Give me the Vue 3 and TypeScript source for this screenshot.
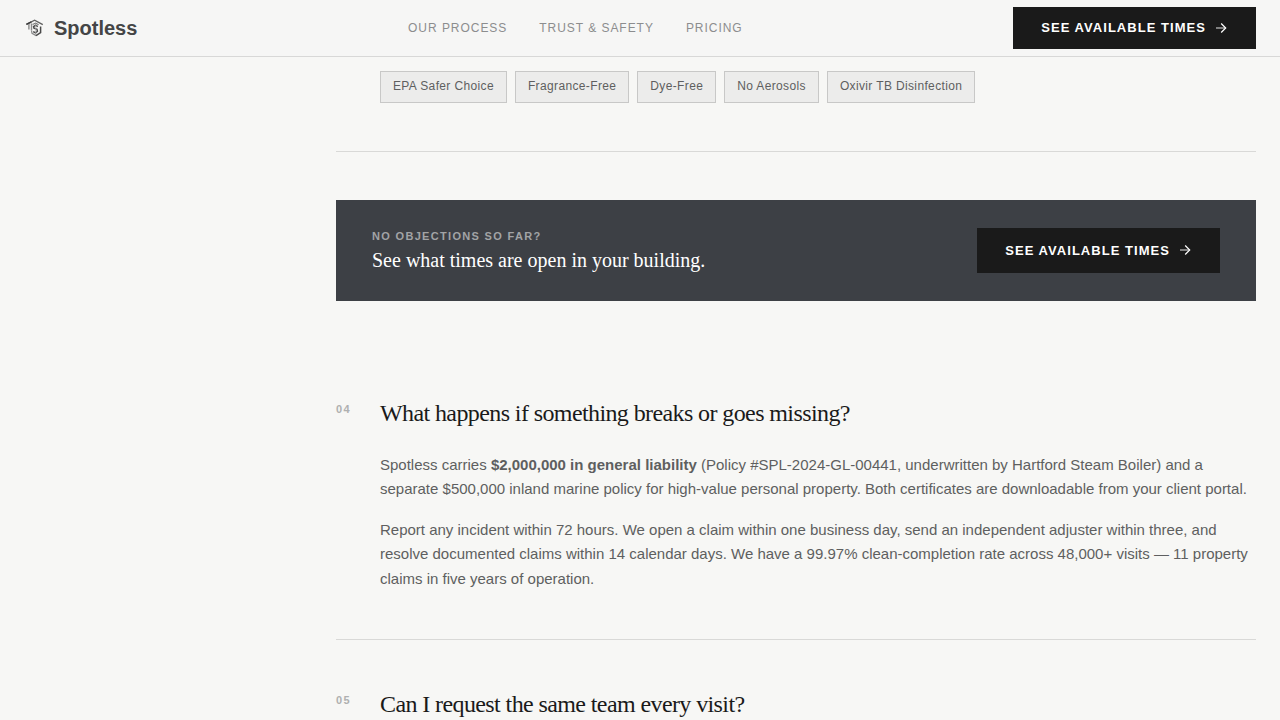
<script setup lang="ts">
interface Segment {
  text: string
  strong?: boolean
}

interface Question {
  number: string
  title: string
  paragraphs: Segment[][]
}

const links: string[] = ['Our Process', 'Trust & Safety', 'Pricing']

const tags: string[] = [
  'EPA Safer Choice',
  'Fragrance-Free',
  'Dye-Free',
  'No Aerosols',
  'Oxivir TB Disinfection',
]

const questions: Question[] = [
  {
    number: '04',
    title: 'What happens if something breaks or goes missing?',
    paragraphs: [
      [
        { text: 'Spotless carries ' },
        { text: '$2,000,000 in general liability', strong: true },
        {
          text: ' (Policy #SPL-2024-GL-00441, underwritten by Hartford Steam Boiler) and a separate $500,000 inland marine policy for high-value personal property. Both certificates are downloadable from your client portal.',
        },
      ],
      [
        {
          text: 'Report any incident within 72 hours. We open a claim within one business day, send an independent adjuster within three, and resolve documented claims within 14 calendar days. We have a 99.97% clean-completion rate across 48,000+ visits — 11 property claims in five years of operation.',
        },
      ],
    ],
  },
  { number: '05', title: 'Can I request the same team every visit?', paragraphs: [] },
]
</script>

<template>
  <div class="page">
    <header class="topbar">
      <a class="brand" href="#">
        <svg class="brand-mark" viewBox="0 0 20 20" fill="none" aria-hidden="true">
          <path d="M2.4 6.4 10.6 2.2 18.8 6.6" stroke="#606060" stroke-width="1.4" />
          <path d="M2.4 6.4 7.4 3.8" stroke="#3c3c3c" stroke-width="1.4" />
          <path d="M4.9 6v5.6M7.5 5.6v7" stroke="#8a8a8a" stroke-width="1.4" />
          <path d="M7.5 12.6 8 15.4 12.2 17.6" stroke="#8a8a8a" stroke-width="1.2" />
          <path d="M12 17.6 16.6 14.6V8.6" stroke="#4a4a4a" stroke-width="1.5" />
          <path d="M8.6 6.4 11.6 5 14.6 6.8" stroke="#777" stroke-width="1.1" />
          <path d="M13.8 8.6 11.6 7.2 9.6 8.6 10 10.2 13 11.4 13.4 13.2 11.6 14.8 9.2 13.6" stroke="#4a4a4a" stroke-width="1.5" />
          <path d="M11.8 6.4v9.2" stroke="#b4b4b4" stroke-width="0.8" />
        </svg>
        <span>Spotless</span>
      </a>
      <nav class="links" aria-label="Main">
        <a v-for="link in links" :key="link" href="#">{{ link }}</a>
      </nav>
      <button class="cta cta-compact" type="button">
        <span>See available times</span>
        <svg viewBox="0 0 14 14" fill="none" aria-hidden="true">
          <path d="M2 7h9.5" stroke="currentColor" stroke-opacity="0.75" stroke-width="1.2" />
          <path d="M7.2 2.5 11.7 7l-4.5 4.5" stroke="currentColor" stroke-width="1.2" />
        </svg>
      </button>
    </header>

    <main class="layout">
      <aside></aside>
      <div class="content">
        <section class="entry entry-tags">
          <span></span>
          <ul class="tags">
            <li v-for="tag in tags" :key="tag">{{ tag }}</li>
          </ul>
        </section>

        <section class="banner">
          <div class="banner-copy">
            <p class="eyebrow">No objections so far?</p>
            <p class="banner-title">See what times are open in your building.</p>
          </div>
          <button class="cta" type="button">
            <span>See available times</span>
            <svg viewBox="0 0 14 14" fill="none" aria-hidden="true">
              <path d="M2 7h9.5" stroke="currentColor" stroke-opacity="0.75" stroke-width="1.2" />
              <path d="M7.2 2.5 11.7 7l-4.5 4.5" stroke="currentColor" stroke-width="1.2" />
            </svg>
          </button>
        </section>

        <article v-for="question in questions" :key="question.number" class="entry">
          <span class="number">{{ question.number }}</span>
          <div>
            <h2>{{ question.title }}</h2>
            <p v-for="(paragraph, index) in question.paragraphs" :key="index" class="answer">
              <template v-for="segment in paragraph" :key="segment.text"><strong v-if="segment.strong">{{ segment.text }}</strong><template v-else>{{ segment.text }}</template></template>
            </p>
          </div>
        </article>
      </div>
    </main>
  </div>
</template>

<style>
body {
  margin: 0;
  background: #f7f7f5;
}
</style>

<style scoped>
.page {
  height: 100vh;
  overflow: hidden;
  background: #f7f7f5;
  color: #5e5f60;
  font-family: "Liberation Sans", Arial, sans-serif;
}

.topbar {
  display: flex;
  align-items: center;
  justify-content: space-between;
  box-sizing: border-box;
  height: 57px;
  padding: 0 24px;
  border-bottom: 1px solid #d8d8d7;
  background: #f6f6f5;
}

.brand {
  display: flex;
  align-items: center;
  gap: 10px;
  color: #444546;
  font-size: 20px;
  font-weight: 700;
  text-decoration: none;
}

.brand-mark {
  width: 20px;
  height: 20px;
}

.links {
  display: flex;
  gap: 32px;
}

.links a {
  color: #8c8d8e;
  font-size: 12px;
  letter-spacing: 0.08em;
  text-decoration: none;
  text-transform: uppercase;
}

.cta {
  display: flex;
  flex: none;
  align-items: flex-start;
  gap: 8px;
  padding: 15px 28px;
  border: 0;
  background: #1a1a1a;
  color: #fff;
  font-family: inherit;
  font-size: 13px;
  font-weight: 700;
  letter-spacing: 0.08em;
  line-height: 15px;
  text-transform: uppercase;
}

.cta svg {
  width: 14px;
  height: 14px;
}

.cta-compact {
  padding-block: 14px;
  line-height: 14px;
}

.layout {
  display: grid;
  grid-template-columns: 240px minmax(0, 1fr);
  gap: 72px;
  padding: 0 24px;
}

.entry {
  display: grid;
  grid-template-columns: 28px minmax(0, 1fr);
  gap: 16px;
  padding: 48px 0;
  border-bottom: 1px solid #d9d9d7;
}

.entry-tags {
  padding-top: 14px;
}

.tags {
  display: flex;
  flex-wrap: wrap;
  gap: 8px;
  margin: 0;
  padding: 0;
  list-style: none;
}

.tags li {
  padding: 5px 12px 7px;
  border: 1px solid #c8c8c7;
  background: #ececeb;
  font-size: 12px;
  letter-spacing: 0.03em;
  line-height: 18px;
}

.banner {
  display: flex;
  align-items: center;
  justify-content: space-between;
  gap: 24px;
  margin: 48px 0;
  padding: 28px 36px;
  background: #3d4045;
}

.banner p {
  margin: 0;
}

.banner .eyebrow {
  margin-bottom: 4px;
  color: #a2a4a6;
  font-size: 11px;
  font-weight: 700;
  letter-spacing: 0.12em;
  line-height: 16px;
  text-transform: uppercase;
}

.banner-title {
  padding-bottom: 1px;
  color: #fff;
  font-family: "Liberation Serif", "Times New Roman", serif;
  font-size: 20px;
  line-height: 24px;
}

.number {
  padding-top: 4px;
  color: #afb0b0;
  font-size: 11px;
  font-weight: 700;
  letter-spacing: 0.12em;
  line-height: 16px;
}

h2 {
  margin: 0 0 24px;
  color: #1a1a1a;
  font-family: "Liberation Serif", "Times New Roman", serif;
  font-size: 24px;
  font-weight: 400;
  letter-spacing: -0.025em;
  line-height: 32px;
}

.answer {
  margin: 0 0 16px;
  font-size: 15px;
  line-height: 1.625;
}

.answer:last-child {
  margin-bottom: 0;
}
</style>
